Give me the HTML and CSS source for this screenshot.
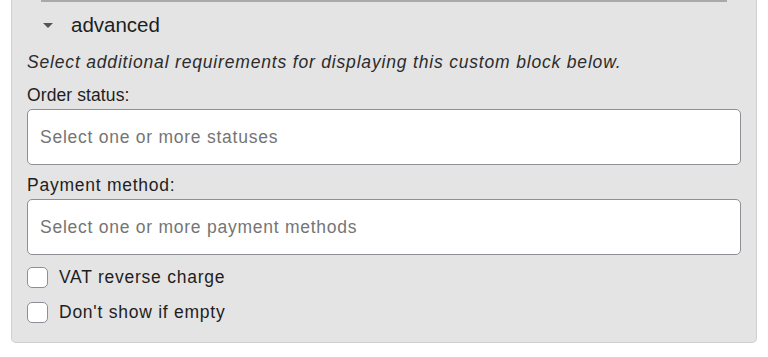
FILE: index.html
```html
<!DOCTYPE html>
<html lang="en">
<head>
    <meta charset="UTF-8">
    <title>Custom block settings</title>
    <link rel="stylesheet" href="styles.css">
</head>
<body>
    <div class="panel">
        <div class="prev-box"></div>

        <div class="toggle">
            <span class="caret"></span>
            <span>advanced</span>
        </div>

        <p class="desc">Select additional requirements for displaying this custom block below.</p>

        <label class="field-label" for="orderStatus">Order status:</label>
        <div class="select-box" id="orderStatus">Select one or more statuses</div>

        <label class="field-label" for="paymentMethod">Payment method:</label>
        <div class="select-box" id="paymentMethod">Select one or more payment methods</div>

        <div class="check-row">
            <input type="checkbox" id="vatReverse">
            <label for="vatReverse">VAT reverse charge</label>
        </div>
        <div class="check-row">
            <input type="checkbox" id="hideEmpty">
            <label for="hideEmpty">Don't show if empty</label>
        </div>
    </div>
</body>
</html>
```

FILE: styles.css
```css
body {
    margin: 0;
    background: #fff;
    font-family: "Liberation Sans", Arial, sans-serif;
    color: #1e1e1e;
}
.panel {
    margin: 0 11px;
    background: #e4e4e4;
    border: 1px solid #d0d0d0;
    border-top: none;
    border-radius: 0 0 5px 5px;
    padding: 0 15px 18px;
    font-size: 17.5px;
    letter-spacing: 0.75px;
}
.prev-box {
    margin: 0 14px;
    height: 2px;
    background: #a9a9a9;
}
.toggle {
    display: flex;
    align-items: center;
    margin-top: 8px;
    height: 30px;
    font-size: 20.5px;
    letter-spacing: 0;
    padding-left: 16px;
}
.caret {
    width: 0;
    height: 0;
    border-left: 5px solid transparent;
    border-right: 5px solid transparent;
    border-top: 5px solid #555;
    margin-right: 18px;
}
.desc {
    margin: 10px 0 0;
    line-height: 24px;
    font-style: italic;
    letter-spacing: 0.82px;
    color: #2c2c2c;
}
.field-label {
    display: block;
    margin-top: 9px;
    line-height: 24px;
}
.field-label:first-of-type {
    letter-spacing: 0.1px;
}
.select-box {
    margin-top: 2px;
    height: 54px;
    box-sizing: content-box;
    border: 1px solid #8c8f94;
    border-radius: 5px;
    background: #fff;
    padding: 0 12px;
    display: flex;
    align-items: center;
    color: #757575;
}
.select-box + .field-label {
    margin-top: 8px;
}
.check-row {
    display: flex;
    align-items: center;
    gap: 11px;
    height: 24px;
    margin-top: 10px;
}
.check-row + .check-row {
    margin-top: 11px;
}
input[type="checkbox"] {
    appearance: none;
    margin: 0;
    width: 21px;
    height: 21px;
    border: 1px solid #8c8f94;
    border-radius: 5px;
    background: #fff;
}
```
